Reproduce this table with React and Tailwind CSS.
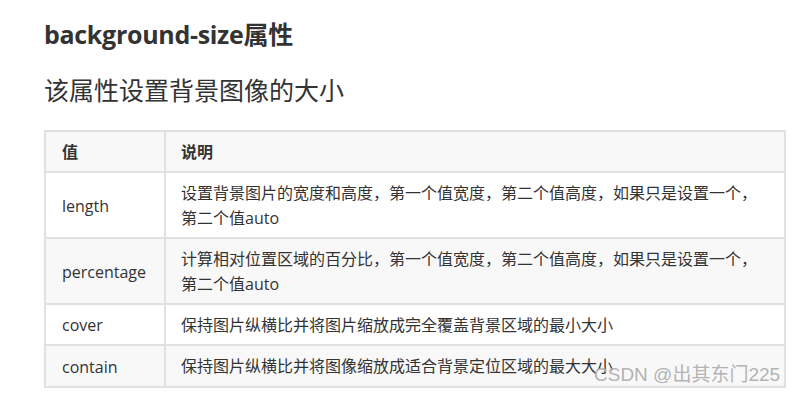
const rows = [
  {
    value: 'length',
    desc: '设置背景图片的宽度和高度，第一个值宽度，第二个值高度，如果只是设置一个，第二个值auto',
  },
  {
    value: 'percentage',
    desc: '计算相对位置区域的百分比，第一个值宽度，第二个值高度，如果只是设置一个，第二个值auto',
  },
  { value: 'cover', desc: '保持图片纵横比并将图片缩放成完全覆盖背景区域的最小大小' },
  { value: 'contain', desc: '保持图片纵横比并将图像缩放成适合背景定位区域的最大大小' },
];

const font = { fontFamily: '"Open Sans", "Noto Sans CJK SC", sans-serif' };

export default function App() {
  return (
    <div className="relative w-[797px] h-[398px] bg-white text-[#333] overflow-hidden" style={font}>
      <div className="pl-[44px]">
        <h2 className="mt-[18px] text-[25px] leading-[32px] font-bold tracking-[-0.3px]">background-size属性</h2>
        <p className="mt-[23px] text-[25px] leading-[34px]">该属性设置背景图像的大小</p>

        <div className="mt-[23px] w-[742px] border-2 border-[#dfe2e5] text-[16px] leading-[25px]">
          <div className="flex bg-[#f8f8f8] font-bold">
            <div className="w-[120px] shrink-0 border-r-2 border-[#dfe2e5] pl-4 pt-[8px] pb-[6px]">值</div>
            <div className="flex-1 pl-[15px] pr-[15px] pt-[8px] pb-[6px]">说明</div>
          </div>
          {rows.map((r, i) => (
            <div
              key={r.value}
              className={`flex border-t-2 border-[#dfe2e5] ${i % 2 === 1 ? 'bg-[#f8f8f8]' : 'bg-white'}`}
            >
              <div className="w-[120px] shrink-0 flex items-center border-r-2 border-[#dfe2e5] pl-4 pt-[8px] pb-[6px]">
                {r.value}
              </div>
              <div className={`flex-1 pl-[15px] pr-[15px] pt-[8px] ${i === 3 ? 'pb-[7px]' : 'pb-[6px]'}`}>{r.desc}</div>
            </div>
          ))}
        </div>
      </div>

      <div
        className="absolute left-[594px] top-[362px] text-[19px] leading-[26px] text-[#b3b3b3]"
        style={{ fontFamily: '"Liberation Sans", "Noto Sans CJK SC", sans-serif' }}
      >
        CSDN @出其东门225
      </div>
    </div>
  );
}
